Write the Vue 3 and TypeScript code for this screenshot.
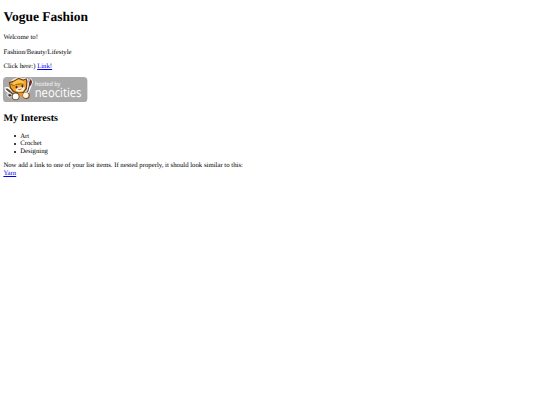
<template>
  <main class="page">
    <h1>{{ title }}</h1>
    <p>Welcome to!</p>
    <p>Fashion/Beauty/Lifestyle</p>
    <p>Click here:) <a href="#">Link!</a></p>
    <a class="badge" href="#">
      <svg viewBox="0 0 200 60" role="img" aria-label="hosted by neocities">
        <rect width="200" height="60" rx="9" fill="#a9a9a9" />
        <!-- pen on the left -->
        <path d="M3 25 L12 23 L31 39 L25 47 L5 33 Z" fill="#fff" />
        <path d="M5 28 L11 27 L27 40 L23 44 Z" fill="#5b4a3c" />
        <path d="M8 39 L17 37 L24 43 L16 50 L9 45 Z" fill="#ddd" />
        <path d="M11 42 L17 40 L21 44 L16 47 Z" fill="#403a36" />
        <!-- cat -->
        <path d="M15 12 L24 5 L36 0 L49 3 L53 1 L60 5 L59 28 L51 39 L37 42 L23 37 L15 26 Z" fill="#f4eadb" />
        <path d="M14 12 L26 8 L37 2 L48 6 L56 3 L58 10 L57 28 L49 38 L37 40 L24 36 L16 26 Z" fill="#6a401c" />
        <path d="M17 14 L27 11 L37 5 L48 9 L54 6 L55 12 L54 26 L48 35 L37 37 L26 33 L19 25 Z" fill="#f3a52b" />
        <path d="M24 12 L37 6 L48 10 L51 17 L38 16 L25 22 Z" fill="#ffc44c" />
        <path d="M30 27 L38 25 L50 23 L52 27 L47 34 L37 35 L31 33 Z" fill="#fff1d8" />
        <path d="M19 17 L27 22 M27 20 Q33 15 49 17" fill="none" stroke="#8b4d13" stroke-width="2" />
        <ellipse cx="32" cy="24" rx="2" ry="3.5" fill="#3b2919" />
        <ellipse cx="46" cy="22" rx="2" ry="3.5" fill="#3b2919" />
        <path d="M36 29 L40 30 L44 28" fill="none" stroke="#a14a2c" stroke-width="2" />
        <!-- paws -->
        <path d="M35 38 L45 37 L51 43 L46 48 L37 45 Z" fill="#e59625" />
        <circle cx="30" cy="46" r="9" fill="#6d4a2c" />
        <circle cx="30" cy="46" r="7" fill="#fff" />
        <circle cx="55" cy="44" r="8.5" fill="#8a5524" />
        <circle cx="54" cy="43" r="6.5" fill="#fff4df" />
        <!-- brush -->
        <path d="M66 2 L71 11 L68 21 L61 38 L56 36 L60 15 Z" fill="#fff" />
        <path d="M66 4 L69 12 L66 21 L61 21 L62 12 Z" fill="#702c2c" />
        <path d="M63 19 L58 36" stroke="#59392b" stroke-width="2.5" />
        <text class="hosted" x="76" y="22" textLength="60" lengthAdjust="spacingAndGlyphs">hosted by</text>
        <text class="brand" x="75" y="47" textLength="111" lengthAdjust="spacingAndGlyphs">neocities</text>
      </svg>
    </a>
    <h2>My Interests</h2>
    <ul>
      <li v-for="item in interests" :key="item">{{ item }}</li>
    </ul>
    <p class="note">
      Now add a link to one of your list items. If nested properly, it should look similar to this:
      <br />
      <a href="#">Yarn</a>
    </p>
  </main>
</template>

<script setup lang="ts">
const title: string = 'Vogue Fashion'
const interests: string[] = ['Art', 'Crochet', 'Designing']
</script>

<style>
body {
  margin: 0;
  background: #fff;
}
</style>

<style scoped>
.page {
  padding: 0 3.375px;
  display: flow-root;
  font-family: 'Liberation Serif', 'Times New Roman', serif;
  font-size: 6.75px;
  line-height: 7.6px;
  color: #000;
  text-rendering: geometricPrecision;
}

h1 {
  margin: 9.05px 0 9.6px;
  font-size: 13.5px;
  line-height: 15.6px;
}

h2 {
  margin: 9.2px 0 8.2px;
  font-size: 10.125px;
  line-height: 11.4px;
}

p {
  margin: 6.75px 0;
}

a {
  color: #0000ee;
  text-decoration: underline;
}

.badge {
  display: block;
  width: 84.375px;
  height: 27px;
  margin-top: -0.5px;
}

.badge svg {
  display: block;
  width: 84.375px;
  height: 25.3125px;
}

.hosted,
.brand {
  fill: #fff;
  font-family: 'Open Sans', sans-serif;
}

.hosted {
  font-size: 14px;
}

.brand {
  font-size: 30px;
}

ul {
  margin: 6.75px 0;
  padding-left: 10.2px;
  list-style: none;
}

li {
  display: flex;
  align-items: center;
  gap: 4.65px;
}

li::before {
  content: '';
  width: 2px;
  height: 2px;
  border-radius: 50%;
  background: #000;
}

.note {
  margin-top: 6.6px;
}
</style>
